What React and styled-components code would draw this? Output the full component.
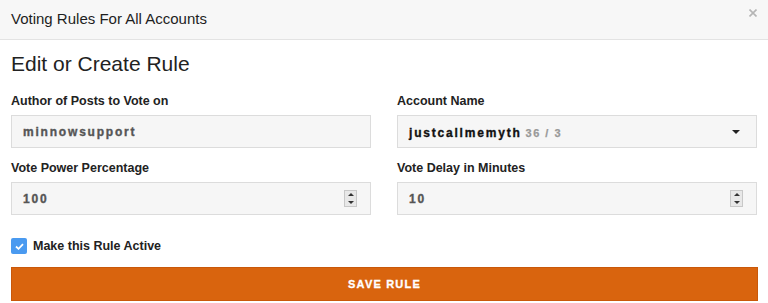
import React from 'react';
import styled, {createGlobalStyle} from 'styled-components';

const GlobalStyle = createGlobalStyle`
    body {
        margin: 0;
        background: #fff;
        font-family: "Liberation Sans", Arial, sans-serif;
        color: #222;
    }
`;

const Modal = styled.div`
    width: 768px;
    height: 303px;
    overflow: hidden;
    background: #fff;
`;

const Header = styled.div`
    height: 40px;
    display: flex;
    align-items: center;
    justify-content: space-between;
    padding: 0 11px 2px 11px;
    box-sizing: border-box;
    background: #f7f7f7;
    border-bottom: 1px solid #e3e3e3;
`;

const Title = styled.div`
    font-size: 15px;
    color: #1e1e1e;
`;

const Close = styled.div`
    align-self: flex-start;
    margin-top: 9px;
    margin-right: 0;
    line-height: 0;
`;

const Body = styled.div`
    padding: 11px 11px 0 11px;
`;

const Heading = styled.h2`
    margin: 0 0 17px 0;
    font-size: 21px;
    font-weight: normal;
    color: #222;
    line-height: 26px;
`;

const Grid = styled.div`
    display: grid;
    grid-template-columns: 360px 360px;
    column-gap: 26px;
    row-gap: 13px;
`;

const Field = styled.div`
    display: flex;
    flex-direction: column;
    gap: 7px;
`;

const Label = styled.label`
    font-size: 12.5px;
    font-weight: bold;
    color: #222;
    line-height: 14px;
`;

const InputBox = styled.div`
    height: 33px;
    box-sizing: border-box;
    border: 1px solid #dcdcdc;
    background: #f6f6f6;
    display: flex;
    align-items: center;
    justify-content: space-between;
    padding: 0 13px 0 11px;
`;

const Value = styled.span`
    font-size: 12px;
    font-weight: bold;
    letter-spacing: 1.8px;
    -webkit-text-stroke: 0.35px currentColor;
    color: ${props => props.dark ? '#111' : '#555'};
`;

const Muted = styled.span`
    font-size: 11px;
    font-weight: bold;
    letter-spacing: 1.5px;
    -webkit-text-stroke: 0.25px currentColor;
    color: #999;
    margin-left: 4px;
`;

const Spinner = styled.div`
    width: 11px;
    height: 15px;
    border: 1px solid #c8c8c8;
    background: #e8e8e8;
    display: flex;
    flex-direction: column;
    align-items: center;
    justify-content: space-around;
`;

const Arrow = styled.div`
    width: 0;
    height: 0;
    border-left: 3px solid transparent;
    border-right: 3px solid transparent;
    ${props => props.up
        ? 'border-bottom: 3px solid #333;'
        : 'border-top: 3px solid #333;'}
`;

const Caret = styled.div`
    width: 0;
    height: 0;
    border-left: 4px solid transparent;
    border-right: 4px solid transparent;
    border-top: 4px solid #222;
    margin-right: 3px;
`;

const CheckRow = styled.div`
    display: flex;
    align-items: center;
    gap: 6px;
    margin: 23px 0 13px 0;
`;

const CheckBox = styled.div`
    width: 16px;
    height: 16px;
    border-radius: 2px;
    background: #4a9af0;
    display: flex;
    align-items: center;
    justify-content: center;
`;

const CheckLabel = styled.span`
    font-size: 12.5px;
    font-weight: bold;
    color: #222;
`;

const SaveButton = styled.button`
    width: 747px;
    height: 34px;
    background: #d9640e;
    border: 1px solid #c9580a;
    color: #fff;
    font-family: "Liberation Sans", Arial, sans-serif;
    font-size: 11px;
    font-weight: bold;
    letter-spacing: 1.2px;
    -webkit-text-stroke: 0.3px #fff;
    cursor: pointer;
`;

const NumberInput = ({value}) => (
    <InputBox>
        <Value>{value}</Value>
        <Spinner>
            <Arrow up />
            <Arrow />
        </Spinner>
    </InputBox>
);

export default function App() {
    return (
        <Modal>
            <GlobalStyle />
            <Header>
                <Title>Voting Rules For All Accounts</Title>
                <Close>
                    <svg width="8" height="8" viewBox="0 0 8 8">
                        <path d="M0.5 0.5 L7.5 7.5 M7.5 0.5 L0.5 7.5" stroke="#b5b5b5" strokeWidth="1.6" />
                    </svg>
                </Close>
            </Header>
            <Body>
                <Heading>Edit or Create Rule</Heading>
                <Grid>
                    <Field>
                        <Label>Author of Posts to Vote on</Label>
                        <InputBox>
                            <Value>minnowsupport</Value>
                        </InputBox>
                    </Field>
                    <Field>
                        <Label>Account Name</Label>
                        <InputBox>
                            <span>
                                <Value dark>justcallmemyth</Value>
                                <Muted>36 / 3</Muted>
                            </span>
                            <Caret />
                        </InputBox>
                    </Field>
                    <Field>
                        <Label>Vote Power Percentage</Label>
                        <NumberInput value="100" />
                    </Field>
                    <Field>
                        <Label>Vote Delay in Minutes</Label>
                        <NumberInput value="10" />
                    </Field>
                </Grid>
                <CheckRow>
                    <CheckBox>
                        <svg width="9" height="7" viewBox="0 0 9 7">
                            <path d="M1 3.5 L3.5 5.8 L8 1.2" stroke="#fff" strokeWidth="1.8" fill="none" />
                        </svg>
                    </CheckBox>
                    <CheckLabel>Make this Rule Active</CheckLabel>
                </CheckRow>
                <SaveButton>SAVE RULE</SaveButton>
            </Body>
        </Modal>
    );
}
